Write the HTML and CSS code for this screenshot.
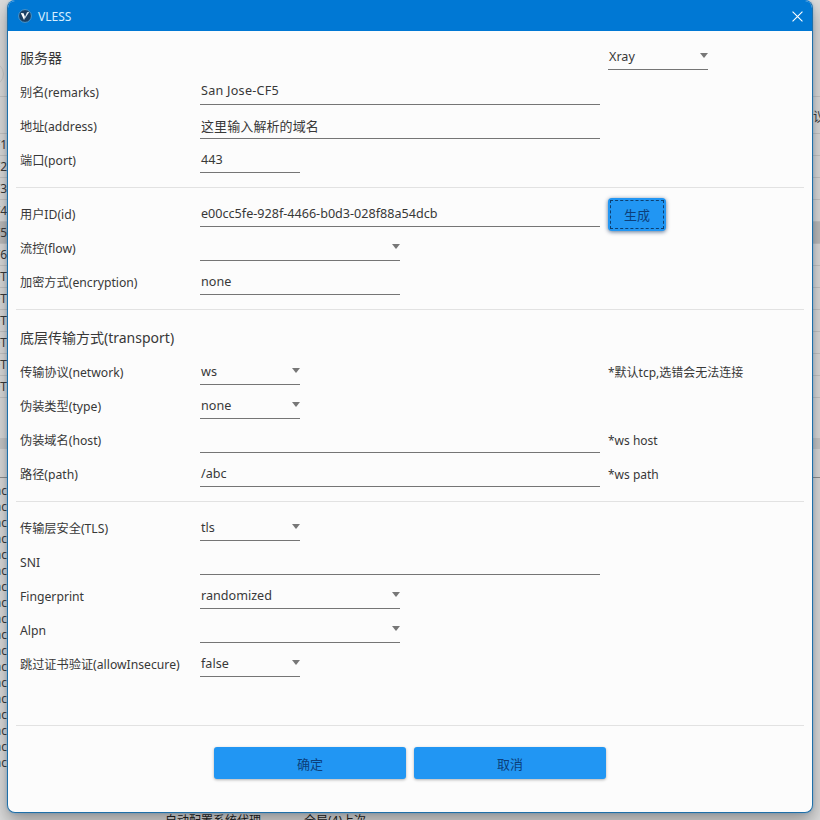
FILE: index.html
```html
<!DOCTYPE html>
<html lang="zh-CN">
<head>
<meta charset="utf-8">
<title>VLESS</title>
<link rel="stylesheet" href="styles.css">
</head>
<body>
<div class="backdrop">
  <div class="toolbar"><span class="round"></span></div>
  <div class="thead"><span class="right-tail">议</span></div>
  <div class="trow"><span class="tail">F1</span></div>
  <div class="trow"><span class="tail">F2</span></div>
  <div class="trow"><span class="tail">F3</span></div>
  <div class="trow"><span class="tail">F4</span></div>
  <div class="trow selected"><span class="tail">F5</span></div>
  <div class="trow"><span class="tail">F6</span></div>
  <div class="trow"><span class="tail">FT</span></div>
  <div class="trow"><span class="tail">FT</span></div>
  <div class="trow"><span class="tail">FT</span></div>
  <div class="trow"><span class="tail">FT</span></div>
  <div class="trow"><span class="tail">FT</span></div>
  <div class="trow"><span class="tail">FT</span></div>
  <div class="band"></div>
  <div class="log">
    <div class="lrow"><span class="tail">ac</span></div>
    <div class="lrow"><span class="tail">ac</span></div>
    <div class="lrow"><span class="tail">ac</span></div>
    <div class="lrow"><span class="tail">ac</span></div>
    <div class="lrow"><span class="tail">ac</span></div>
    <div class="lrow"><span class="tail">ac</span></div>
    <div class="lrow"><span class="tail">ac</span></div>
    <div class="lrow"><span class="tail">ac</span></div>
    <div class="lrow"><span class="tail">ac</span></div>
    <div class="lrow"><span class="tail">ac</span></div>
    <div class="lrow"><span class="tail">ac</span></div>
    <div class="lrow"><span class="tail">ac</span></div>
    <div class="lrow"><span class="tail">ac</span></div>
    <div class="lrow"><span class="tail">ac</span></div>
    <div class="lrow"><span class="tail">ac</span></div>
    <div class="lrow"><span class="tail">ac</span></div>
    <div class="lrow"><span class="tail">ac</span></div>
    <div class="lrow"><span class="tail">ac</span></div>
  </div>
  <div class="status"><span>自动配置系统代理</span><span>全局(4)上次</span></div>
</div>

<div class="dialog">
  <div class="titlebar">
    <svg class="logo" viewBox="0 0 14 14" width="14" height="14" aria-hidden="true">
      <circle cx="7" cy="7" r="6.4" fill="#1b3f63" stroke="#4a97cf" stroke-width="1"/>
      <path d="M2.8 4 L5.6 4.2 L7 8 L6 11 Z" fill="#ffffff"/>
      <path d="M6 11 L11.4 2.8 L9 3.2 L7 8 Z" fill="#dfeaf4"/>
    </svg>
    <span class="title">VLESS</span>
    <svg class="close" viewBox="0 0 10 10" width="11" height="11" aria-hidden="true">
      <path d="M0.5 0.5 L9.5 9.5 M9.5 0.5 L0.5 9.5" stroke="#ffffff" stroke-width="1" fill="none"/>
    </svg>
  </div>

  <div class="body">
    <section class="section first">
      <div class="row heading-row">
        <div class="heading">服务器</div>
        <div></div>
        <div class="field select w100"><span>Xray</span><i class="arrow"></i></div>
      </div>
      <div class="row"><div class="label">别名(remarks)</div><div class="field wide w400"><span>San Jose-CF5</span></div></div>
      <div class="row"><div class="label">地址(address)</div><div class="field cjk w400"><span>这里输入解析的域名</span></div></div>
      <div class="row"><div class="label">端口(port)</div><div class="field w100"><span>443</span></div></div>
    </section>

    <section class="section">
      <div class="row">
        <div class="label">用户ID(id)</div>
        <div class="field w400"><span>e00cc5fe-928f-4466-b0d3-028f88a54dcb</span></div>
        <button class="btn generate" type="button"><span class="focus">生成</span></button>
      </div>
      <div class="row"><div class="label">流控(flow)</div><div class="field select w200"><span></span><i class="arrow"></i></div></div>
      <div class="row"><div class="label">加密方式(encryption)</div><div class="field w200"><span>none</span></div></div>
    </section>

    <section class="section">
      <div class="row heading-row"><div class="heading">底层传输方式(transport)</div></div>
      <div class="row"><div class="label">传输协议(network)</div><div class="field select w100"><span>ws</span><i class="arrow"></i></div><div class="hint">*默认tcp,选错会无法连接</div></div>
      <div class="row"><div class="label">伪装类型(type)</div><div class="field select w100"><span>none</span><i class="arrow"></i></div></div>
      <div class="row"><div class="label">伪装域名(host)</div><div class="field w400"><span></span></div><div class="hint">*ws host</div></div>
      <div class="row"><div class="label">路径(path)</div><div class="field w400"><span>/abc</span></div><div class="hint">*ws path</div></div>
    </section>

    <section class="section">
      <div class="row"><div class="label">传输层安全(TLS)</div><div class="field select w100"><span>tls</span><i class="arrow"></i></div></div>
      <div class="row"><div class="label">SNI</div><div class="field w400"><span></span></div></div>
      <div class="row"><div class="label">Fingerprint</div><div class="field select w200"><span>randomized</span><i class="arrow"></i></div></div>
      <div class="row"><div class="label">Alpn</div><div class="field select w200"><span></span><i class="arrow"></i></div></div>
      <div class="row"><div class="label">跳过证书验证(allowInsecure)</div><div class="field select w100"><span>false</span><i class="arrow"></i></div></div>
    </section>

    <div class="actions">
      <button class="btn action" type="button">确定</button>
      <button class="btn action" type="button">取消</button>
    </div>
  </div>
</div>
</body>
</html>
```

FILE: styles.css
```css
* { box-sizing: border-box; }

html, body {
  margin: 0;
  height: 820px;
  overflow: hidden;
}

body {
  position: relative;
  background: #dcdcdc;
  font-family: "Noto Sans", "Noto Sans CJK SC", sans-serif;
  font-size: 13px;
  color: #333333;
}

/* dimmed main window behind the dialog */
.backdrop {
  height: 820px;
  overflow: hidden;
  display: flex;
  flex-direction: column;
  color: #3a3a3a;
}
.toolbar {
  height: 97px;
  flex: none;
  padding: 62px 0 0 0;
  border-bottom: 1px solid #c6c6c6;
  display: flex;
  justify-content: flex-start;
}
.round {
  display: block;
  width: 24px;
  height: 24px;
  margin-left: -20px;
  border: 1px solid #c9c9c9;
  border-radius: 50%;
}
.thead {
  height: 37px;
  flex: none;
  border-bottom: 1px solid #c6c6c6;
  display: flex;
  justify-content: flex-end;
  align-items: center;
  padding-top: 2px;
}
.right-tail {
  display: block;
  width: 7px;
  overflow: hidden;
  font-size: 13px;
  line-height: 16px;
  white-space: nowrap;
}
.trow {
  height: 22px;
  flex: none;
  border-bottom: 1px solid #c6c6c6;
  display: flex;
  align-items: center;
}
.trow.selected { background: #bdbdbd; }
.tail {
  width: 7px;
  height: 14px;
  display: flex;
  justify-content: flex-end;
  white-space: nowrap;
  font-size: 12px;
  line-height: 14px;
}
.band {
  flex: none;
  height: 11px;
  margin-top: 40px;
  background: #c8c8c8;
}
.log {
  flex: none;
  margin-top: 28px;
  padding-top: 5px;
  border-top: 1px solid #8f8f8f;
}
.lrow {
  height: 16px;
  display: flex;
  align-items: center;
}
.status {
  flex: none;
  margin-top: 41px;
  padding-left: 165px;
  display: flex;
  gap: 43px;
  font-size: 12px;
  line-height: 18px;
  color: #222222;
}

/* dialog window */
.dialog {
  position: absolute;
  left: 7px;
  top: 0;
  width: 806px;
  height: 813px;
  display: flex;
  flex-direction: column;
  background: #fcfcfc;
  border: 1px solid #1f6fa8;
  border-top-color: #0078d4;
  border-radius: 8px;
  box-shadow: 0 0 3px rgba(0, 120, 212, 0.35), 0 8px 18px rgba(0, 0, 0, 0.34);
  overflow: hidden;
}
.titlebar {
  flex: none;
  height: 30px;
  display: flex;
  align-items: center;
  padding: 0 9px 0 10px;
  background: #0078d4;
}
.logo { flex: none; margin-right: 6px; }
.title {
  flex: 1;
  font-size: 12px;
  color: #d6efff;
}
.close { flex: none; }

.body {
  flex: 1;
  display: flex;
  flex-direction: column;
  padding: 0 8px;
}
.section {
  padding: 5px 4px 14px;
  border-bottom: 1px solid #e2e2e2;
}
.section.first { padding-top: 4px; }
.section:nth-of-type(4) { padding-bottom: 48px; }

.row {
  height: 34px;
  display: grid;
  grid-template-columns: 180px 408px 1fr;
  align-items: end;
}
.heading-row {
  height: 35px;
  margin-bottom: 1px;
  padding-bottom: 1px;
}
.heading-row .field {
  margin-bottom: -1px;
}
.label {
  font-size: 12.2px;
  line-height: 18px;
  padding-bottom: 3px;
  color: #383838;
  white-space: nowrap;
}
.heading {
  font-size: 14px;
  line-height: 20px;
  padding-bottom: 1.5px;
  color: #383838;
  white-space: nowrap;
}
.field {
  position: relative;
  height: 26px;
  padding: 3px 1px 0;
  border-bottom: 1px solid #757575;
  font-size: 12.6px;
  line-height: 20px;
  color: #383838;
  white-space: nowrap;
}
.wide { letter-spacing: 0.25px; padding-top: 2px; }
.cjk { font-size: 13px; letter-spacing: 0.1px; padding-top: 3px; }
.w100 { width: 100px; }
.w200 { width: 200px; }
.w400 { width: 400px; }
.arrow {
  position: absolute;
  right: 0;
  top: 9px;
  width: 0;
  height: 0;
  border-left: 4px solid transparent;
  border-right: 4px solid transparent;
  border-top: 5px solid #777777;
}
.hint {
  font-size: 12px;
  line-height: 18px;
  padding-bottom: 3px;
  color: #383838;
  white-space: nowrap;
}

.btn {
  display: block;
  padding: 0;
  border: 0;
  border-radius: 3px;
  background: #2196f3;
  color: #0c3f7a;
  font-family: inherit;
  font-size: 13px;
  box-shadow: 0 1px 3px rgba(0, 0, 0, 0.3);
}
.generate {
  width: 58px;
  height: 33px;
  margin-bottom: -4px;
  padding: 2px;
  border-radius: 4px;
  box-shadow: 0 1px 4px rgba(0, 40, 90, 0.65);
}
.focus {
  display: flex;
  align-items: center;
  justify-content: center;
  height: 100%;
  border: 1px dashed #0d3f70;
}
.actions {
  display: flex;
  justify-content: center;
  gap: 8px;
  padding-top: 21px;
}
.action {
  width: 192px;
  height: 32px;
}
```
